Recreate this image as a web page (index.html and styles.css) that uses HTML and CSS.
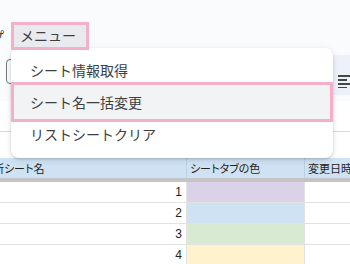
FILE: index.html
```html
<!DOCTYPE html>
<html lang="ja">
<head>
    <meta charset="UTF-8" />
    <title>メニュー</title>
    <link rel="stylesheet" href="styles.css">
</head>
<body>
    <div class="screen">
        <div class="menubar">
            <span class="menu-prev">ヘルプ</span>
            <span class="menu-btn">メニュー</span>
        </div>

        <div class="toolbar">
            <div class="tool-box"></div>
            <div class="tool-spacer"></div>
            <div class="tool-icon">
                <svg width="13" height="13" viewBox="0 0 13 13">
                    <rect x="0" y="0" width="13" height="2" fill="#444746"/>
                    <rect x="0" y="4" width="9" height="2" fill="#444746"/>
                    <rect x="0" y="8" width="13" height="2" fill="#444746"/>
                    <rect x="0" y="12" width="9" height="1.5" fill="#444746"/>
                </svg>
            </div>
        </div>

        <div class="formula-bar"></div>
        <div class="col-letters"></div>

        <div class="grid">
            <div class="row head">
                <div class="cell c1"><span class="clip-left">新シート名</span></div>
                <div class="cell c2">シートタブの色</div>
                <div class="cell c3">変更日時</div>
            </div>
            <div class="freeze"></div>
            <div class="row">
                <div class="cell c1 num">1</div>
                <div class="cell c2 purple"></div>
                <div class="cell c3"></div>
            </div>
            <div class="row">
                <div class="cell c1 num">2</div>
                <div class="cell c2 blue"></div>
                <div class="cell c3"></div>
            </div>
            <div class="row">
                <div class="cell c1 num">3</div>
                <div class="cell c2 green"></div>
                <div class="cell c3"></div>
            </div>
            <div class="row">
                <div class="cell c1 num">4</div>
                <div class="cell c2 yellow"></div>
                <div class="cell c3"></div>
            </div>
        </div>

        <div class="dropdown">
            <div class="item first">シート情報取得</div>
            <div class="item active">シート名一括変更</div>
            <div class="item">リストシートクリア</div>
        </div>
    </div>
</body>
</html>
```

FILE: styles.css
```css
* {
    margin: 0;
    padding: 0;
    box-sizing: border-box;
}

body {
    font-family: "Noto Sans CJK JP", "Noto Sans", sans-serif;
    background-color: #f9fbfd;
    color: #3c4043;
}

.screen {
    position: relative;
    width: 350px;
    height: 264px;
    overflow: hidden;
}

/* menu bar */
.menubar {
    height: 55px;
    display: flex;
    align-items: flex-start;
    padding-top: 22px;
    font-size: 14px;
    background-color: #f9fbfd;
}

.menu-prev {
    margin-left: -38px;
    margin-right: 7px;
    line-height: 28px;
}

.menu-btn {
    position: relative;
    z-index: 20;
    display: block;
    width: 78px;
    height: 28px;
    line-height: 21px;
    padding-left: 6px;
    border: 3px solid #f4afc9;
    background-color: #e8eaed;
}

/* toolbar */
.toolbar {
    height: 46px;
    display: flex;
    align-items: flex-start;
    padding-top: 4px;
    background-color: #f9fbfd;
}

.tool-box {
    width: 40px;
    height: 25px;
    margin-left: 6px;
    border: 1px solid #747775;
    border-radius: 4px;
}

.tool-spacer {
    flex: 1;
}

.tool-icon {
    width: 17px;
    height: 40px;
    margin-top: -4px;
    padding: 14px 0 0 5px;
    background-color: #edf2fa;
}

.formula-bar {
    height: 31px;
    background-color: #fff;
    border-bottom: 1px solid #dadce0;
}

.col-letters {
    height: 26px;
    background-color: #fff;
}

/* sheet */
.grid {
    background-color: #fff;
    color: #222;
}

.row {
    display: flex;
    height: 21px;
    border-bottom: 1px solid #e2e2e2;
}

.row.head {
    height: 20px;
    border-bottom: none;
    background-color: #cfe2f3;
}

.freeze {
    height: 4px;
    background-color: #c4c4c4;
}

.cell {
    height: 100%;
    font-size: 11px;
    line-height: 20px;
    font-feature-settings: "palt";
    border-right: 1px solid #e2e2e2;
    white-space: nowrap;
    overflow: hidden;
}

.head .cell {
    border-right-color: #b9cfe2;
}

.c1 {
    width: 187px;
}

.c2 {
    width: 118px;
    padding-left: 3px;
}

.c3 {
    flex: 1;
    padding-left: 3px;
    border-right: none;
}

.clip-left {
    display: block;
    margin-left: -7px;
}

.num {
    text-align: right;
    padding-right: 4px;
    font-family: "Liberation Sans", Arial, sans-serif;
    font-size: 12px;
}

.purple { background-color: #d9d2e9; }
.blue { background-color: #cfe2f3; }
.green { background-color: #d9ead3; }
.yellow { background-color: #fff2cc; }

/* dropdown menu */
.dropdown {
    position: absolute;
    left: 11px;
    top: 48px;
    width: 322px;
    height: 110px;
    padding-top: 10px;
    background-color: #fff;
    border-radius: 8px;
    box-shadow: 0 2px 6px rgba(0, 0, 0, 0.12), 0 1px 2px rgba(0, 0, 0, 0.15);
    z-index: 10;
}

.item {
    height: 24px;
    line-height: 24px;
    padding-left: 19px;
    font-size: 14px;
}

.item.active {
    height: 40px;
    line-height: 34px;
    padding-left: 16px;
    background-color: #f1f3f4;
    border: 3px solid #f4afc9;
}
```
